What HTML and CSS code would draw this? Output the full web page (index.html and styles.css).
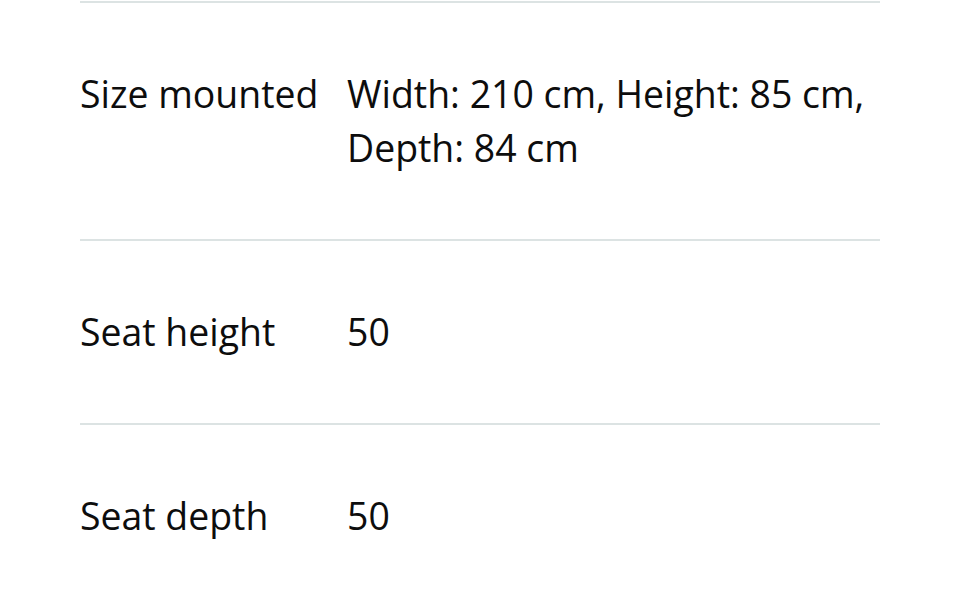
FILE: index.html
```html
<!DOCTYPE html>
<html lang="en">
<head>
<meta charset="utf-8">
<title>Specifications</title>
<link rel="stylesheet" href="styles.css">
</head>
<body>
<div class="specs">
  <div class="row">
    <div class="label">Size mounted</div>
    <div class="value">Width: 210 cm, Height: 85 cm, Depth: 84 cm</div>
  </div>
  <div class="row">
    <div class="label">Seat height</div>
    <div class="value">50</div>
  </div>
  <div class="row">
    <div class="label">Seat depth</div>
    <div class="value">50</div>
  </div>
</div>
</body>
</html>
```
FILE: styles.css
```css
html, body {
  margin: 0;
  padding: 0;
  background: #ffffff;
}
body {
  font-family: "Open Sans", "Liberation Sans", sans-serif;
  color: #0d0d0d;
}
.specs {
  margin: 1px 80px 0 80px;
  border-top: 2px solid #dce3e3;
}
.row {
  display: grid;
  grid-template-columns: 267px 1fr;
  padding: 64px 0;
  border-bottom: 2px solid #dce3e3;
  font-size: 37.4px;
  line-height: 54px;
}
```
